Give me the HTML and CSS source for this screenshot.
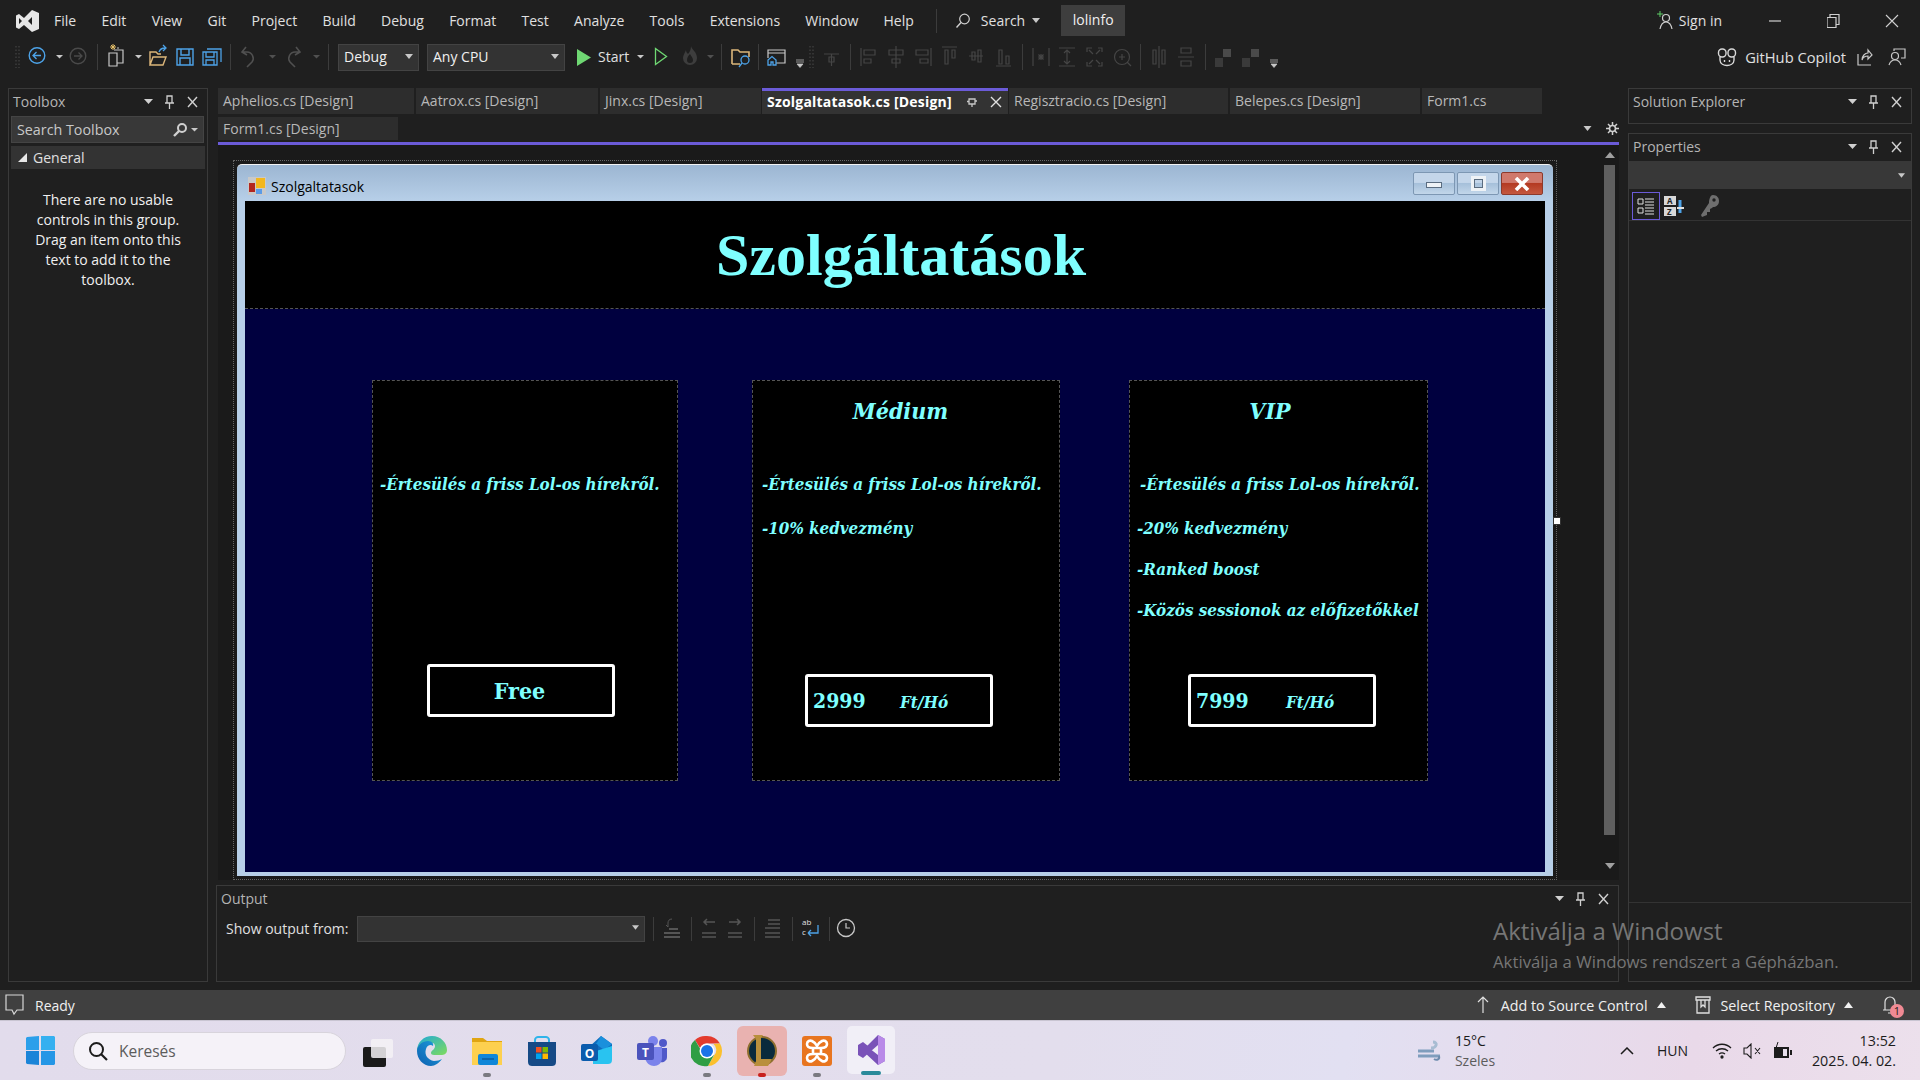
FILE: index.html
```html
<!DOCTYPE html>
<html lang="en">
<head>
  <meta charset="UTF-8">
  <meta name="viewport" content="width=device-width, initial-scale=1.0">
  <title>lolinfo - Visual Studio</title>
  <link rel="stylesheet" href="styles.css">
</head>
<body>
  <svg class="defs" width="0" height="0">
    <symbol id="pane-ctl" viewBox="0 0 60 14">
      <path d="M0 4h9l-4.500 5z" fill="#d0d0d0"/>
      <path d="M23 1h5v7h-5zM21 8h9M25.500 8v6" fill="none" stroke="#d0d0d0" stroke-width="1.300"/>
      <path d="M44 2l9 10M53 2l-9 10" stroke="#d0d0d0" stroke-width="1.400"/>
    </symbol>
    <symbol id="drop" viewBox="0 0 8 5"><path d="M0 0h8l-4 5z" fill="#c8c8c8"/></symbol>
  </svg>

  <!-- Title bar -->
  <header class="titlebar">
    <svg class="vs-logo" width="26" height="24" viewBox="0 0 26 24">
      <path d="M18 1l7 3v16l-7 3-8-7-5 4-3-1.500V6.500L5 5l5 4zM18 8l-4 4 4 4zM5 9v6l3-3z" fill="#e6e6e6" fill-rule="evenodd"/>
    </svg>
    <nav class="menu">
      <span>File</span><span>Edit</span><span>View</span><span>Git</span><span>Project</span><span>Build</span><span>Debug</span><span>Format</span><span>Test</span><span>Analyze</span><span>Tools</span><span>Extensions</span><span>Window</span><span>Help</span>
    </nav>
    <div class="title-sep"></div>
    <div class="title-search">
      <svg width="16" height="16" viewBox="0 0 16 16"><circle cx="9.500" cy="6" r="4.800" fill="none" stroke="#d0d0d0" stroke-width="1.200"/><path d="M6 9.500L1.500 14.500" stroke="#d0d0d0" stroke-width="1.400"/></svg>
      <span>Search</span>
      <svg width="8" height="5"><use href="#drop"/></svg>
    </div>
    <div class="solution-name">lolinfo</div>
    <div class="title-right">
      <svg width="18" height="20" viewBox="0 0 18 20"><path d="M4 0v6M1 3h6" stroke="#5fd068" stroke-width="1"/><circle cx="10" cy="7" r="3.500" fill="none" stroke="#d0d0d0" stroke-width="1.200"/><path d="M4 18c1-5 3-7 6-7s5 2 6 7" fill="none" stroke="#d0d0d0" stroke-width="1.200"/></svg>
      <span class="sign-in">Sign in</span>
      <svg class="win-btn" width="58" height="14" viewBox="0 0 58 14"><path d="M0 7h12" stroke="#d0d0d0" stroke-width="1.200"/></svg>
      <svg class="win-btn" width="58" height="14" viewBox="0 0 58 14"><path d="M0 3.500h9v10H0zM3 3.500V.5h9v10H9" fill="none" stroke="#d0d0d0" stroke-width="1.200"/></svg>
      <svg class="win-btn win-btn-last" width="14" height="14" viewBox="0 0 14 14"><path d="M1 1l12 12M13 1L1 13" stroke="#d0d0d0" stroke-width="1.100"/></svg>
    </div>
  </header>

  <!-- Toolbar: icon strips use page coordinates in their viewBox -->
  <div class="toolbar">
    <svg width="318" height="28" viewBox="12 43 318 28" fill="none">
      <path d="M16 46v22M19 46v22" stroke="#4a4a4a" stroke-dasharray="1.500 2"/>
      <circle cx="37" cy="55.500" r="7.800" stroke="#4da3e8" stroke-width="1.400"/><path d="M41 55.500h-8M36.500 52l-3.500 3.500 3.500 3.500" stroke="#4da3e8" stroke-width="1.300"/>
      <path d="M56 55h7l-3.500 3.500z" fill="#c8c8c8"/>
      <circle cx="78" cy="56" r="7.800" stroke="#4a4a4a" stroke-width="1.400"/><path d="M74 56h8M78.500 52.500L82 56l-3.500 3.500" stroke="#4a4a4a" stroke-width="1.300"/>
      <path d="M97.500 44v26" stroke="#3c3c3c"/>
      <path d="M109 53h8v13h-8zM114 50h9v13h-6M119 48h-2" stroke="#c8c8c8" stroke-width="1.200"/><path d="M110 47h6M113 44v6M111 45l4 4M115 45l-4 4" stroke="#e6c06a"/>
      <path d="M135 55h7l-3.500 3.500z" fill="#c8c8c8"/>
      <path d="M150 65V52h6l2 2h3M150 65l3-8h13l-3 8z" stroke="#dcb67a" stroke-width="1.400"/><path d="M159 52c1-3 3-4 6-4M163 45l3 3-3 3" stroke="#4da3e8" stroke-width="1.300"/>
      <path d="M177 49h16v16h-16zM181 49v6h8v-6M180 65v-7h10v7" stroke="#4da3e8" stroke-width="1.400"/>
      <path d="M203 52h14v13h-14zM206 52v5h8v-5M206 65v-5h8v5M207 49h14v13" stroke="#4da3e8" stroke-width="1.300"/>
      <path d="M230.500 44v26" stroke="#3c3c3c"/>
      <path d="M247 67l5-5c3-4 0-10-5-10h-4M246 47l-4 5 5 3" stroke="#505050" stroke-width="1.600"/>
      <path d="M269 55h7l-3.500 3.500z" fill="#505050"/>
      <path d="M295 67l-5-5c-3-4 0-10 5-10h4M296 47l4 5-5 3" stroke="#505050" stroke-width="1.600"/>
      <path d="M313 55h7l-3.500 3.500z" fill="#505050"/>
      <path d="M328.500 44v26" stroke="#3c3c3c"/>
    </svg>
    <div class="combo combo-debug"><span>Debug</span><svg width="8" height="5"><use href="#drop"/></svg></div>
    <div class="combo combo-cpu"><span>Any CPU</span><svg width="8" height="5"><use href="#drop"/></svg></div>
    <svg class="start-play" width="16" height="17" viewBox="0 0 16 17"><path d="M1 0l14 8.500L1 17z" fill="#6fd873"/></svg>
    <span class="start-label">Start</span>
    <svg width="650" height="28" viewBox="633 43 650 28" fill="none">
      <path d="M636 55h7l-3.500 3.500z" fill="#c8c8c8"/>
      <path d="M654.500 48.500l11 8-11 8z" stroke="#6fd873" stroke-width="1.300"/>
      <path d="M690 46c1 4 6 6 6 12a7 7 0 0 1-14 0c0-3 2-5 3-8 0 2 1 3 2 4 2-2 3-5 3-8zM689 54c-2 2-3 4-3 6a3 3 0 0 0 6 0c0-2-2-4-3-6z" fill="#3d3d3d" fill-rule="evenodd"/>
      <path d="M706 55h7l-3.500 3.500z" fill="#505050"/>
      <path d="M720.500 44v26" stroke="#3c3c3c"/>
      <path d="M731 64V50h6l2 2h9v5M731 64h8" stroke="#dcb67a" stroke-width="1.600"/><circle cx="744" cy="60" r="4" stroke="#4da3e8" stroke-width="1.300"/><path d="M741 63l-3 4" stroke="#4da3e8" stroke-width="1.300"/>
      <path d="M757.500 44v26" stroke="#3c3c3c"/>
      <path d="M775 63h9V50h-17v8M767 53h17" stroke="#c8c8c8" stroke-width="1.200"/><path d="M767 65v-5l4-3.500 4 3.500v5h-3v-3h-2v3z" stroke="#4da3e8" stroke-width="1.300"/>
      <path d="M795 60h8M795 62h8M796 64h6l-3 3.500z" fill="#c8c8c8" stroke="#c8c8c8" stroke-width=".7"/>
      <path d="M809 46v22M812 46v22" stroke="#4a4a4a" stroke-dasharray="1.500 2"/>
      <g stroke="#454545" stroke-width="1.200">
        <path d="M823 54h15M830.500 54v12M828 57h5v5h-5z"/>
        <path d="M849.500 44v26M1021.500 44v26M1139.500 44v26M1204.500 44v26" stroke="#3c3c3c" stroke-width="1"/>
        <path d="M860 48v18M863 50h11v5h-11zM863 59h7v4h-7z"/>
        <path d="M895 46v22M888 50h14v5h-14zM891 59h8v4h-8z"/>
        <path d="M930 48v18M915 50h12v5h-12zM919 59h8v4h-8z"/>
        <path d="M941 47h15M944 50h3v14h-3zM951 50h3v8h-3z"/>
        <path d="M968 56h14M971 52h3v8h-3zM977 50h3v12h-3z"/>
        <path d="M995 66h15M998 50h3v14h-3zM1005 56h3v8h-3z"/>
        <path d="M1032 48v18M1048 48v18M1037 57h6M1040 54v6M1037.500 54.500l5 5M1042.500 54.500l-5 5"/>
        <path d="M1058 48h16M1058 66h16M1066 50v14M1063 53l3-3 3 3M1063 61l3 3 3-3"/>
        <path d="M1086 52v-4h5M1097 48h4v4M1101 62v4h-4M1091 66h-5v-4M1088 50l4 4M1099 50l-4 4M1099 64l-4-4M1088 64l4-4"/>
        <circle cx="1121" cy="57" r="7.500"/><path d="M1126 62l4 4M1118 57h6M1121 54v6"/>
        <path d="M1158 46v22M1152 50h3v14h-3zM1161 50h3v14h-3z"/>
        <path d="M1177 57h16M1180 48h10v5h-10zM1180 61h10v5h-10z"/>
      </g>
      <path d="M1222 49h8v8h-8z" fill="#4a4a4a"/><path d="M1214 58h8v9h-8z" fill="#3a3a3a"/>
      <path d="M1250 49h8v8h-8z" fill="#4a4a4a"/><path d="M1241 58h8v9h-8z" fill="#3a3a3a"/>
      <path d="M1269 60h8M1269 62h8M1270 64h6l-3 3.500z" fill="#c8c8c8" stroke="#c8c8c8" stroke-width=".7"/>
    </svg>
    <div class="toolbar-right">
      <svg width="20" height="20" viewBox="0 0 20 20" fill="none" stroke="#d8d8d8" stroke-width="1.400"><rect x="1.500" y="2" width="7.500" height="8" rx="3.500"/><rect x="11" y="2" width="7.500" height="8" rx="3.500"/><path d="M3 10v3c0 4 4 5.500 7 5.500s7-1.500 7-5.500v-3"/><path d="M7.500 13v2M12.500 13v2"/></svg>
      <span class="copilot">GitHub Copilot</span>
      <svg width="16" height="18" viewBox="0 0 16 18" fill="none" stroke="#c8c8c8" stroke-width="1.200"><path d="M1 6v11h13M5 12c0-4 3-7 6-7V2l4 5-4 4V8c-3 0-5 1-6 4z"/></svg>
      <svg width="18" height="18" viewBox="0 0 18 18" fill="none" stroke="#c8c8c8" stroke-width="1.200"><path d="M6 3V1h11v9h-4"/><circle cx="7" cy="8" r="3.500"/><path d="M1 17c1-3 3-5 6-5s5 2 6 5"/></svg>
    </div>
  </div>

  <main class="workspace">
    <!-- Toolbox -->
    <aside class="pane toolbox">
      <div class="pane-head"><span>Toolbox</span><svg width="60" height="14"><use href="#pane-ctl"/></svg></div>
      <div class="toolbox-search">
        <span>Search Toolbox</span>
        <svg width="28" height="16" viewBox="0 0 28 16" fill="none"><circle cx="11" cy="6" r="4" stroke="#d0d0d0" stroke-width="2"/><path d="M8 9l-5 5" stroke="#d0d0d0" stroke-width="2.400"/><path d="M20 6h7l-3.500 3.500z" fill="#c8c8c8"/></svg>
      </div>
      <div class="toolbox-group"><svg width="9" height="9"><path d="M9 0v9H0z" fill="#e8e8e8"/></svg><span>General</span></div>
      <p class="toolbox-empty">There are no usable controls in this group. Drag an item onto this text to add it to the toolbox.</p>
    </aside>

    <div class="center">
      <div class="tab-row">
        <div class="tab tab-aphelios">Aphelios.cs [Design]</div>
        <div class="tab tab-aatrox">Aatrox.cs [Design]</div>
        <div class="tab tab-jinx">Jinx.cs [Design]</div>
        <div class="tab tab-active">
          <span>Szolgaltatasok.cs [Design]</span>
          <svg width="35" height="12" viewBox="0 0 35 12"><path d="M2 3h6v5H2zM0 5.500h2M5 8v3M8 5h2" stroke="#c8c8c8" fill="none" stroke-width="1.300"/><path d="M24 1l10 10M34 1L24 11" stroke="#e0e0e0" stroke-width="1.400"/></svg>
        </div>
        <div class="tab tab-regisztracio">Regisztracio.cs [Design]</div>
        <div class="tab tab-belepes">Belepes.cs [Design]</div>
        <div class="tab tab-form">Form1.cs</div>
      </div>
      <div class="tab-row tab-row-2">
        <div class="tab tab-form-design">Form1.cs [Design]</div>
        <div class="tab-tools">
          <svg width="9" height="5"><use href="#drop"/></svg>
          <svg width="13" height="13" viewBox="0 0 13 13" fill="none"><circle cx="6.500" cy="6.500" r="3" stroke="#d0d0d0" stroke-width="1.600"/><path d="M6.500 0v3M6.500 10v3M0 6.500h3M10 6.500h3M2 2l2 2M9 9l2 2M11 2L9 4M4 9l-2 2" stroke="#d0d0d0" stroke-width="1.500"/></svg>
        </div>
      </div>

      <div class="designer">
        <div class="surface">
          <div class="form-window">
            <div class="form-title">
              <svg width="18" height="18" viewBox="0 0 18 18"><rect width="18" height="18" fill="#c9c9c9"/><rect x="1" y="6" width="6" height="9" fill="#b3261e"/><rect x="8" y="1" width="9" height="10" fill="#f2b71e"/><rect x="8" y="12" width="6" height="5" fill="#5b9be6"/></svg>
              <span>Szolgaltatasok</span>
              <div class="form-btns">
                <div class="form-btn"><i class="glyph-min"></i></div>
                <div class="form-btn"><i class="glyph-max"></i></div>
                <div class="form-btn form-btn-close"><svg width="18" height="14" viewBox="0 0 18 14"><path d="M3 1l12 12M15 1L3 13" stroke="#fff" stroke-width="3.600"/></svg></div>
              </div>
            </div>
            <div class="form-client">
              <div class="hero"><h1>Szolgáltatások</h1></div>
              <div class="plans">
                <section class="plan plan-free">
                  <div class="plan-title"></div>
                  <ul class="plan-list">
                    <li>-Értesülés a friss Lol-os hírekről.</li>
                  </ul>
                  <div class="price"><span class="price-free">Free</span></div>
                </section>
                <section class="plan plan-medium">
                  <div class="plan-title">Médium</div>
                  <ul class="plan-list">
                    <li>-Értesülés a friss Lol-os hírekről.</li>
                    <li>-10% kedvezmény</li>
                  </ul>
                  <div class="price"><span class="price-num">2999</span><span class="price-unit">Ft/Hó</span></div>
                </section>
                <section class="plan plan-vip">
                  <div class="plan-title">VIP</div>
                  <ul class="plan-list">
                    <li class="first-line">-Értesülés a friss Lol-os hírekről.</li>
                    <li>-20% kedvezmény</li>
                    <li>-Ranked boost</li>
                    <li>-Közös sessionok az előfizetőkkel</li>
                  </ul>
                  <div class="price"><span class="price-num">7999</span><span class="price-unit">Ft/Hó</span></div>
                </section>
              </div>
            </div>
          </div>
          <div class="resize-handle"></div>
        </div>
        <div class="v-scroll">
          <svg width="10" height="6"><path d="M0 6h10L5 0z" fill="#a0a0a0"/></svg>
          <div class="v-thumb"></div>
          <svg class="v-down" width="10" height="6"><path d="M0 0h10L5 6z" fill="#a0a0a0"/></svg>
        </div>
      </div>

      <!-- Output -->
      <section class="pane output">
        <div class="pane-head"><span>Output</span><svg width="60" height="14"><use href="#pane-ctl"/></svg></div>
        <div class="output-bar">
          <span>Show output from:</span>
          <div class="combo combo-output"><svg width="7" height="5"><use href="#drop"/></svg></div>
          <svg width="224" height="26" viewBox="645 916 224 26" fill="none">
            <path d="M653.500 917v24M691.500 917v24M754.500 917v24M792.500 917v24M829.500 917v24" stroke="#3c3c3c"/>
            <path d="M664 933h16M664 937h16M669 929h9" stroke="#555" stroke-width="2"/><path d="M672 919c-3 0-4 2-4 4v4l-2-2" stroke="#555"/>
            <path d="M702 933h14M702 937h14M715 922h-11M707 919l-3 3 3 3M728 933h14M728 937h14M729 922h11M737 919l3 3-3 3" stroke="#555" stroke-width="1.500"/>
            <path d="M768 920h12M768 924h12M765 928h15M765 933h15M765 937h15" stroke="#555" stroke-width="1.400"/>
            <path d="M808 933h10v-8M808 933l3-3M808 933l3 3" stroke="#4da3e8" stroke-width="1.300"/>
            <text class="abc"><tspan x="802" y="925">ab</tspan><tspan x="802" y="935">c</tspan></text>
            <circle cx="846" cy="928" r="8.500" stroke="#c8c8c8" stroke-width="1.300"/><path d="M846 923v5h4" stroke="#c8c8c8" stroke-width="1.200"/>
          </svg>
        </div>
      </section>
    </div>

    <!-- Right docks -->
    <aside class="right-docks">
      <div class="pane solution">
        <div class="pane-head"><span>Solution Explorer</span><svg width="60" height="14"><use href="#pane-ctl"/></svg></div>
      </div>
      <div class="pane properties">
        <div class="pane-head"><span>Properties</span><svg width="60" height="14"><use href="#pane-ctl"/></svg></div>
        <div class="props-combo"><svg width="7" height="5"><use href="#drop"/></svg></div>
        <div class="props-tools">
          <div class="props-tool-on">
            <svg width="18" height="18" viewBox="0 0 18 18" fill="none" stroke="#e0e0e0"><path d="M1 2h5v5H1zM1 11h5v5H1zM8 2h9M8 5h9M8 8h9M8 11h9M8 14h9M8 17h9"/></svg>
          </div>
          <svg width="22" height="22" viewBox="0 0 22 22" fill="none"><rect x="1" y="1" width="12" height="9" fill="#d8d8d8"/><rect x="1" y="12" width="12" height="9" fill="#d8d8d8"/><text class="az"><tspan x="4" y="9">A</tspan><tspan x="4" y="20">Z</tspan></text><path d="M17 5v13" stroke="#4da3e8" stroke-width="3"/><path d="M14 13h7" stroke="#e0e0e0" stroke-width="2"/></svg>
          <svg class="props-key" width="20" height="24" viewBox="0 0 20 24"><path d="M13 1c4 0 6 3 6 6 0 4-3 6-6 6l-1 1-2 1v3H7v3l-5 2-1-2 8-12c0-3 1-8 4-8z" fill="#6e6e6e"/><circle cx="14" cy="6" r="1.700" fill="#1f1f1f"/></svg>
        </div>
        <div class="props-desc"></div>
      </div>
    </aside>

    <div class="activate">
      <div class="activate-big">Aktiválja a Windowst</div>
      <div class="activate-small">Aktiválja a Windows rendszert a Gépházban.</div>
    </div>
  </main>

  <footer class="statusbar">
    <svg width="20" height="22" viewBox="0 0 20 22" fill="none"><path d="M1 1h17v15h-6l-3 4-2-4H1z" stroke="#d8d8d8" stroke-width="1.200"/></svg>
    <span class="status-ready">Ready</span>
    <svg class="status-up" width="12" height="18" viewBox="0 0 12 18" fill="none"><path d="M6 17V1M1 6l5-5 5 5" stroke="#e0e0e0" stroke-width="1.200"/></svg>
    <span class="status-text">Add to Source Control</span>
    <svg class="status-tri" width="9" height="6"><path d="M0 6h9L4.500 0z" fill="#f0f0f0"/></svg>
    <svg class="status-repo" width="16" height="18" viewBox="0 0 16 18" fill="none"><path d="M1 1h14v3H1zM2 4v13h12V4M6 4v7l2-2 2 2V4" stroke="#e0e0e0" stroke-width="1.300"/></svg>
    <span class="status-text">Select Repository</span>
    <svg class="status-tri" width="9" height="6"><path d="M0 6h9L4.500 0z" fill="#f0f0f0"/></svg>
    <div class="bell">
      <svg width="14" height="20" viewBox="0 0 14 20" fill="none"><path d="M2 15V7a5 5 0 0 1 10 0v8M0 15h14M5 18h4" stroke="#e0e0e0" stroke-width="1.200"/></svg>
      <b class="bell-badge">1</b>
    </div>
  </footer>

  <!-- Windows taskbar -->
  <div class="taskbar">
    <svg class="start-logo" width="29" height="29" viewBox="0 0 29 29">
      <path d="M0 2l1-1 12-1v14H0z" fill="#2b9fea"/><path d="M15 0h13l1 1v13H15z" fill="#35b0f0"/><path d="M0 15h13v14l-12-1-1-1z" fill="#1b84d8"/><path d="M15 15h14v13l-1 1H15z" fill="#2596e6"/>
    </svg>
    <div class="task-search">
      <svg width="20" height="20" viewBox="0 0 20 20" fill="none"><circle cx="8.500" cy="8.500" r="6.500" stroke="#1c1c1c" stroke-width="2"/><path d="M13 13l6 6" stroke="#1c1c1c" stroke-width="2.200"/></svg>
      <span>Keresés</span>
    </div>
    <div class="task-apps">
      <div class="app">
        <svg width="32" height="32" viewBox="0 0 32 32"><rect x="2" y="12" width="23" height="20" rx="2" fill="#1a1a1a"/><rect x="10" y="4" width="22" height="19" rx="2" fill="#f4f2f6" fill-opacity=".85"/></svg>
      </div>
      <div class="app">
        <svg width="32" height="32" viewBox="0 0 32 32">
          <defs>
            <linearGradient id="edgeBlue" x1="0" y1="1" x2="1" y2="0"><stop offset="0" stop-color="#0f5fb0"/><stop offset="1" stop-color="#1ba0dd"/></linearGradient>
            <linearGradient id="edgeGreen" x1="0" y1="0" x2="1" y2="1"><stop offset="0" stop-color="#1fa9d8"/><stop offset="1" stop-color="#7fdc5c"/></linearGradient>
          </defs>
          <path d="M1 16C1 7 8 1 16 1c9 0 15 7 15 14 0 4-3 5-6 5h-7c-2 0-3-1-3-2 0-3 4-3 4-7 0-3-3-4-6-3-6 1-9 6-9 9z" fill="url(#edgeGreen)"/>
          <path d="M1 16c0-6 6-10 11-10 4 0 6 3 5 5-2-2-6-1-7 3-2 6 2 11 8 12 3 0 6-1 8-2-3 4-7 7-11 7C7 31 1 24 1 16z" fill="url(#edgeBlue)"/>
        </svg>
      </div>
      <div class="app has-dot">
        <svg width="32" height="32" viewBox="0 0 32 32"><path d="M1 3h11l4 3h15v6H1z" fill="#e0a512"/><path d="M1 7h30v23H1z" fill="#fdd04f"/><rect x="7" y="19" width="20" height="11" rx="2" fill="#0f86d8"/><path d="M11 24h12" stroke="#0a4f8c" stroke-width="1.200"/></svg>
      </div>
      <div class="app">
        <svg width="32" height="32" viewBox="0 0 32 32"><path d="M9 8V5c0-2 2-3 3-3h8c1 0 3 1 3 3v3" fill="none" stroke="#2fb4ea" stroke-width="2"/><path d="M2 7h28v20c0 3-2 4-4 4H6c-2 0-4-1-4-4z" fill="#164a86"/><rect x="10" y="12" width="5.500" height="5.500" fill="#f25022"/><rect x="16.500" y="12" width="5.500" height="5.500" fill="#7fba00"/><rect x="10" y="18.500" width="5.500" height="5.500" fill="#00a4ef"/><rect x="16.500" y="18.500" width="5.500" height="5.500" fill="#ffb900"/></svg>
      </div>
      <div class="app">
        <svg width="32" height="32" viewBox="0 0 32 32"><path d="M8 12L20 1l11 8v14l-6 6H12V12z" fill="#0f6cbd"/><path d="M20 1l11 8-8 6-8-6z" fill="#1a90dc"/><path d="M12 17l19-6v14c0 3-2 4-4 4H12z" fill="#29c3f0"/><rect x="0" y="9" width="17" height="17" rx="2" fill="#0b5cad"/><text x="8.500" y="23" class="app-letter">O</text></svg>
      </div>
      <div class="app">
        <svg width="32" height="32" viewBox="0 0 32 32"><circle cx="17" cy="6" r="5" fill="#7b83eb"/><circle cx="27" cy="8" r="4" fill="#5059c9"/><path d="M22 13h9v9c0 4-4 6-7 5z" fill="#5059c9"/><path d="M9 12h17v11c0 5-4 8-8 8s-8-3-9-8z" fill="#7b83eb"/><rect x="1" y="8" width="17" height="17" rx="2" fill="#4b53bc"/><text x="9.500" y="22" class="app-letter">T</text></svg>
      </div>
      <div class="app has-dot">
        <svg width="32" height="32" viewBox="0 0 32 32"><path d="M16 1a15 15 0 0 1 13 7.500H16a7.500 7.500 0 0 0-7 4.500L4 5a15 15 0 0 1 12-4z" fill="#e33b2e"/><path d="M29 8.500A15 15 0 0 1 17 31l6.500-11.300A7.500 7.500 0 0 0 22.500 9z" fill="#fbc02d"/><path d="M4 5l6.500 11.300A7.500 7.500 0 0 0 23 20L17 31A15 15 0 0 1 4 5z" fill="#2f9e44"/><circle cx="16" cy="16" r="7.500" fill="#fff"/><circle cx="16" cy="16" r="6" fill="#1a73e8"/></svg>
      </div>
      <div class="app app-lol has-dot dot-red">
        <svg width="32" height="34" viewBox="0 0 32 34"><circle cx="16" cy="17" r="14" fill="#0a2a3c" stroke="#8f6f2e" stroke-width="2"/><path d="M7 1h10l-2 3v21h11l-4 7H8l2-5V5z" fill="#b98f3c"/></svg>
      </div>
      <div class="app has-dot">
        <svg width="32" height="32" viewBox="0 0 32 32" fill="none"><rect x="1" y="1" width="30" height="30" rx="3" fill="#e8751f"/><path d="M12 13c-4 0-6-1-6-4s3-4 5-3 4 3 5 5c1-2 3-4 5-5s5 0 5 3-2 4-6 4zM12 19c-4 0-6 1-6 4s3 4 5 3 4-3 5-5c1 2 3 4 5 5s5 0 5-3-2-4-6-4zM12 13v6M20 13v6" stroke="#fff" stroke-width="2.600"/></svg>
      </div>
      <div class="app app-vs has-dot dot-teal">
        <svg width="30" height="32" viewBox="0 0 30 32"><path d="M22 1l7 4v22l-7 4-14-13 5-4 9 7V11L7 24l-5-3V11l5-3 5 4-5 4 0 0" fill="#7a52b8"/><path d="M22 1l7 4v22l-7 4z" fill="#b98ae8"/></svg>
      </div>
    </div>
    <div class="tray">
      <svg class="tray-wind" width="30" height="22" viewBox="0 0 26 22" fill="none"><path d="M1 11h16M1 16h22" stroke="#7f9dbd" stroke-width="3"/><path d="M14 8c6 0 7-6 2-6" stroke="#a8bcd2" stroke-width="3"/><path d="M17 19c3 2 6 0 5-3" stroke="#6d8bad" stroke-width="2"/></svg>
      <div class="weather"><div>15°C</div><div class="weather-sub">Szeles</div></div>
      <svg class="tray-chev" width="14" height="8" viewBox="0 0 14 8" fill="none"><path d="M1 7l6-6 6 6" stroke="#1c1c1c" stroke-width="1.500"/></svg>
      <span class="tray-lang">HUN</span>
      <svg class="tray-wifi" width="20" height="16" viewBox="0 0 20 16" fill="none" stroke="#1c1c1c" stroke-width="1.300"><path d="M1 5c5-5 13-5 18 0M4 8c3.500-3 8.500-3 12 0M7 11c2-1.500 4-1.500 6 0"/><circle cx="10" cy="14" r="1" fill="#1c1c1c"/></svg>
      <svg class="tray-vol" width="18" height="16" viewBox="0 0 18 16" fill="none" stroke="#1c1c1c" stroke-width="1.100"><path d="M1 5h3l4-4v14l-4-4H1zM12 5l5 6M17 5l-5 6"/></svg>
      <svg class="tray-bat" width="20" height="18" viewBox="0 0 20 18"><path d="M2 5h15v11H2z" fill="#1c1c1c"/><path d="M18 8h2v5h-2z" fill="#1c1c1c"/><path d="M6 0L4 6h3L5 11" fill="none" stroke="#1c1c1c"/><path d="M11 7h4v7h-4z" fill="#e8e0ec"/></svg>
      <div class="clock"><div>13:52</div><div>2025. 04. 02.</div></div>
    </div>
  </div>
</body>
</html>
```

FILE: styles.css
```css
/* General Reset */
* {
  box-sizing: border-box;
  margin: 0;
  padding: 0;
}

body {
  width: 1920px;
  height: 1080px;
  overflow: hidden;
  background: #1f1f1f;
  color: #e0e0e0;
  font-family: "Open Sans", "Noto Sans", sans-serif;
  font-size: 14px;
  display: flex;
  flex-direction: column;
}

svg {
  display: block;
  flex: none;
}

.defs {
  position: absolute;
}

/* Title bar */
.titlebar {
  height: 43px;
  padding: 0 0 2px 14px;
  display: flex;
  align-items: center;
}

.menu {
  margin-left: 14px;
  display: flex;
  gap: 25.300px;
}

.title-sep {
  width: 1px;
  height: 24px;
  background: #3c3c3c;
  margin-left: 22px;
}

.title-search {
  margin-left: 18px;
  display: flex;
  align-items: center;
  gap: 7px;
}

.title-search span {
  margin-left: 3px;
}

.solution-name {
  margin-left: 21px;
  width: 64px;
  height: 31px;
  background: #3e3e3e;
  color: #f0f0f0;
  display: flex;
  align-items: center;
  justify-content: center;
  padding-bottom: 2px;
}

.title-right {
  margin-left: auto;
  padding-right: 21px;
  display: flex;
  align-items: center;
}

.sign-in {
  margin-left: 5px;
  margin-right: 47px;
}

/* Toolbar */
.toolbar {
  height: 28px;
  padding-left: 12px;
  display: flex;
  align-items: center;
  flex: none;
}

.combo {
  height: 27px;
  background: #333;
  border: 1px solid #434343;
  padding: 0 5px 2px;
  display: flex;
  align-items: center;
  justify-content: space-between;
  color: #f0f0f0;
}

.combo-debug {
  width: 81px;
  margin-left: 8px;
}

.combo-cpu {
  width: 138px;
  margin-left: 8px;
}

.start-play {
  margin-left: 11px;
}

.start-label {
  margin-left: 6px;
  width: 36px;
  padding-bottom: 2px;
}

.toolbar-right {
  margin-left: auto;
  padding-right: 14px;
  display: flex;
  align-items: center;
  gap: 8px;
}

.copilot {
  margin-right: 3px;
  font-size: 14.700px;
}

.toolbar-right svg:last-child {
  margin-left: 7px;
}

/* Dock layout */
.workspace {
  position: relative;
  height: 894px;
  margin-top: 17px;
  margin-bottom: 8px;
  padding-left: 8px;
  display: flex;
  flex: none;
}

.pane {
  border: 1px solid #3a3a3a;
}

.pane-head {
  height: 27px;
  padding: 0 3px 2px 4px;
  display: flex;
  align-items: center;
  justify-content: space-between;
  color: #b4b4b4;
}

/* Toolbox */
.toolbox {
  width: 200px;
}

.toolbox-search {
  margin: 0 3px 0 2px;
  height: 27px;
  background: #383838;
  border: 1px solid #444;
  padding: 0 4px 0 5px;
  display: flex;
  align-items: center;
  justify-content: space-between;
  color: #c8c8c8;
  font-size: 14.300px;
}

.toolbox-group {
  margin: 3px 2px 0 2px;
  height: 23px;
  background: #333;
  padding-left: 7px;
  display: flex;
  align-items: center;
  gap: 6px;
}

.toolbox-empty {
  margin: 21px 13px 0;
  line-height: 20px;
  text-align: center;
  color: #f0f0f0;
}

/* Document tabs */
.center {
  width: 1403px;
  margin-left: 8px;
  display: flex;
  flex-direction: column;
}

.tab-row {
  height: 26px;
  margin-left: 2px;
  display: flex;
  flex: none;
}

.tab {
  margin-right: 2px;
  padding: 0 0 2px 5px;
  background: #2d2d2d;
  color: #b8b8b8;
  display: flex;
  align-items: center;
}

.tab-aphelios { width: 196px; }
.tab-aatrox { width: 182px; }
.tab-jinx { width: 161px; margin-right: 1px; }
.tab-regisztracio { width: 219px; }
.tab-belepes { width: 190px; }
.tab-form { width: 120px; }
.tab-form-design { width: 180px; padding-bottom: 0; }

.tab-active {
  width: 246px;
  margin-right: 1px;
  padding-right: 6px;
  border-top: 3px solid #6b5bd8;
  background: #333;
  color: #fff;
  font-weight: 700;
  letter-spacing: .2px;
  justify-content: space-between;
}

.tab-row-2 {
  height: 23px;
  margin-top: 3px;
}

.tab-tools {
  margin-left: auto;
  display: flex;
  align-items: center;
  gap: 14px;
}

/* Designer */
.designer {
  height: 738px;
  margin-top: 2px;
  margin-left: 2px;
  border-top: 3px solid #6b5bd8;
  background: #1a1a1a;
  display: flex;
  flex: none;
}

.surface {
  position: relative;
  flex: 1;
  padding: 15px 0 0 15px;
}

.form-window {
  width: 1324px;
  height: 720px;
  border: 1px dotted #666;
  padding: 3px;
}

.form-title {
  height: 37px;
  margin: 0;
  padding: 6px 10px 0 11px;
  border-top: 1px solid #f2f2f2;
  border-radius: 5px 5px 0 0;
  background: linear-gradient(#9cb6d2, #b7cfe8);
  color: #000;
  display: flex;
  align-items: center;
  gap: 5px;
}

.form-btns {
  margin-left: auto;
  margin-top: -5px;
  display: flex;
  gap: 2px;
}

.form-btn {
  width: 42px;
  height: 23px;
  border: 1px solid #7d97b3;
  border-radius: 2px;
  background: linear-gradient(#c4d6ea 45%, #a6c0da 50%, #c2d6ea);
  display: flex;
  align-items: center;
  justify-content: center;
}

.form-btn-close {
  border-color: #8c3a2c;
  background: linear-gradient(#d0796c 45%, #b43a22 50%, #c4583f);
}

.glyph-min {
  width: 16px;
  height: 6px;
  background: #eef2f6;
  border: 1px solid #5a6c80;
  margin-top: 3px;
}

.glyph-max {
  width: 15px;
  height: 15px;
  border: 3px solid #eef2f6;
  outline: 1px solid #5a6c80;
  outline-offset: -4px;
}

.form-client {
  height: 675px;
  border: solid #b7cfe8;
  border-width: 0 8px 4px 8px;
  background: #00003f;
}

.hero {
  height: 108px;
  padding: 2px 0 0 12px;
  background: #000;
  border-bottom: 1px dashed #555;
  display: flex;
  align-items: center;
  justify-content: center;
}

.hero h1 {
  font-family: "Liberation Serif", serif;
  font-size: 60px;
  font-weight: 700;
  color: #7fffff;
}

/* Plans */
.plans {
  padding: 71px 0 0 127px;
  display: flex;
}

.plan {
  height: 401px;
  background: #000;
  border: 1px dashed #555;
  padding-top: 18px;
  display: flex;
  flex-direction: column;
  font-family: "DejaVu Serif", serif;
  font-stretch: condensed;
  font-style: italic;
  font-weight: 700;
  color: #7fffff;
}

.plan-free {
  width: 306px;
  padding-left: 7px;
}

.plan-medium {
  width: 308px;
  margin-left: 74px;
  padding-left: 9px;
}

.plan-vip {
  width: 299px;
  margin-left: 69px;
  padding-left: 7px;
}

.plan-title {
  height: 24px;
  line-height: 24px;
  font-size: 23px;
  text-align: center;
}

.plan-medium .plan-title {
  padding-right: 20px;
}

.plan-vip .plan-title {
  padding-right: 24px;
}

.plan-list {
  margin-top: 51px;
  list-style: none;
  display: flex;
  flex-direction: column;
  gap: 21px;
  font-size: 16.850px;
}

.plan-list li {
  height: 20px;
  line-height: 20px;
  white-space: nowrap;
}

.plan-list li:first-child {
  margin-bottom: 3px;
}

.first-line {
  padding-left: 3px;
}

.price {
  width: 188px;
  height: 53px;
  margin-top: auto;
  margin-bottom: 53px;
  border: 3px solid #fff;
  border-radius: 3px;
  display: flex;
  align-items: center;
  font-style: normal;
}

.plan-free .price {
  margin-left: 47px;
  margin-bottom: 63px;
  justify-content: center;
}

.plan-medium .price {
  margin-left: 43px;
}

.plan-vip .price {
  margin-left: 51px;
}

.plan-vip .price-num {
  width: 90px;
}

.price-free {
  font-size: 23px;
  padding-right: 3px;
}

.price-num {
  margin-left: 5px;
  width: 87px;
  font-size: 21px;
}

.price-unit {
  padding-top: 2px;
  font-size: 17px;
  font-style: italic;
}

.resize-handle {
  position: absolute;
  left: 1335px;
  top: 372px;
  width: 8px;
  height: 8px;
  background: #fff;
  border: 1px solid #333;
}

.v-scroll {
  width: 19px;
  padding-top: 7px;
  display: flex;
  flex-direction: column;
  align-items: center;
}

.v-thumb {
  width: 11px;
  height: 670px;
  margin-top: 7px;
  background: #5f5f5f;
}

.v-down {
  margin-top: 28px;
}

/* Output */
.output {
  height: 97px;
  margin-top: 5px;
}

.output-bar {
  padding-left: 9px;
  display: flex;
  align-items: center;
  height: 29px;
  margin-top: 1px;
}

.combo-output {
  width: 288px;
  height: 26px;
  margin-left: 9px;
  justify-content: flex-end;
}

.abc {
  font-size: 8px;
  fill: #e0e0e0;
  font-family: "Open Sans", sans-serif;
}

.az {
  font-size: 8px;
  font-weight: 700;
  fill: #222;
  font-family: "Open Sans", sans-serif;
}

/* Right docks */
.right-docks {
  width: 284px;
  margin-left: 9px;
  display: flex;
  flex-direction: column;
  gap: 9px;
}

.solution {
  height: 36px;
}

.properties {
  flex: 1;
  display: flex;
  flex-direction: column;
}

.props-combo {
  height: 28px;
  background: #383838;
  padding-right: 6px;
  display: flex;
  align-items: center;
  justify-content: flex-end;
}

.props-tools {
  height: 32px;
  padding: 2px 0 0 3px;
  border-bottom: 1px solid #333;
  display: flex;
  align-items: center;
  gap: 3px;
}

.props-tool-on {
  width: 28px;
  height: 28px;
  border: 1px solid #6b5bd8;
  display: flex;
  align-items: center;
  justify-content: center;
}

.props-key {
  margin-left: 12px;
}

.props-desc {
  margin-top: auto;
  height: 79px;
  border-top: 1px solid #333;
}

.activate {
  position: absolute;
  left: 1493px;
  top: 826px;
  color: #767676;
}

.activate-big {
  font-size: 24px;
  line-height: 34px;
}

.activate-small {
  margin-top: 3px;
  font-size: 16.800px;
  line-height: 22px;
}

/* Status bar */
.statusbar {
  height: 30px;
  flex: none;
  background: #404040;
  padding: 0 23px 0 5px;
  display: flex;
  align-items: center;
  color: #f0f0f0;
}

.status-text {
  font-size: 14.300px;
}

.status-ready {
  margin-left: 10px;
  margin-right: auto;
}

.status-up {
  margin-right: 12px;
}

.status-tri {
  margin-left: 9px;
}

.status-repo {
  margin: 0 10px 0 29px;
}

.bell {
  position: relative;
  margin-left: 30px;
}

.bell-badge {
  position: absolute;
  left: 7px;
  top: 9px;
  width: 14px;
  height: 14px;
  border-radius: 50%;
  background: #f08a94;
  color: #1c1c1c;
  font-size: 11px;
  font-weight: 400;
  line-height: 14px;
  text-align: center;
}

/* Taskbar */
.taskbar {
  height: 60px;
  flex: none;
  border-top: 1px solid #c9c5d2;
  background: linear-gradient(100deg, #e2dcec 0%, #e3deed 55%, #e2e0f2 70%, #e9d9e9 88%, #ece0ec 100%);
  padding-left: 26px;
  display: flex;
  align-items: center;
  color: #1c1c1c;
}

.task-search {
  width: 273px;
  height: 38px;
  margin-left: 18px;
  padding-left: 14px;
  border: 1px solid #d8d4dc;
  border-radius: 19px;
  background: #f5f2f8;
  color: #5c5c5c;
  font-size: 15.500px;
  display: flex;
  align-items: center;
  gap: 11px;
}

.task-apps {
  margin-left: 3px;
  display: flex;
}

.app {
  position: relative;
  width: 55px;
  height: 50px;
  display: flex;
  align-items: center;
  justify-content: center;
}

.has-dot::after {
  content: "";
  position: absolute;
  left: 24px;
  bottom: -1px;
  width: 8px;
  height: 4px;
  border-radius: 2px;
  background: #7a7a80;
}

.app-lol {
  background: #e9b2b0;
  border-radius: 6px;
  width: 50px;
  margin: 0 2px 0 3px;
}

.app-lol::after {
  left: 21px;
}

.dot-red::after {
  background: #c8201c;
}

.app-vs {
  background: #f1eff7;
  border-radius: 5px;
  width: 48px;
  height: 48px;
  margin-left: 3px;
}

.dot-teal::after {
  left: 14px;
  width: 20px;
  background: #2a8a9a;
}

.app-letter {
  font-size: 12px;
  font-weight: 700;
  fill: #fff;
  text-anchor: middle;
}

.tray {
  margin-left: auto;
  padding-right: 24px;
  display: flex;
  align-items: center;
}

.weather {
  margin-left: 10px;
  width: 165px;
  line-height: 20px;
  font-size: 14px;
}

.weather-sub {
  color: #5c5c5c;
}

.tray-lang {
  margin-left: 23px;
}

.tray-wifi {
  margin-left: 24px;
}

.tray-vol {
  margin-left: 11px;
}

.tray-bat {
  margin-left: 11px;
}

.clock {
  margin-left: auto;
  width: 104px;
  text-align: right;
  line-height: 20px;
  font-size: 14.300px;
}
```
